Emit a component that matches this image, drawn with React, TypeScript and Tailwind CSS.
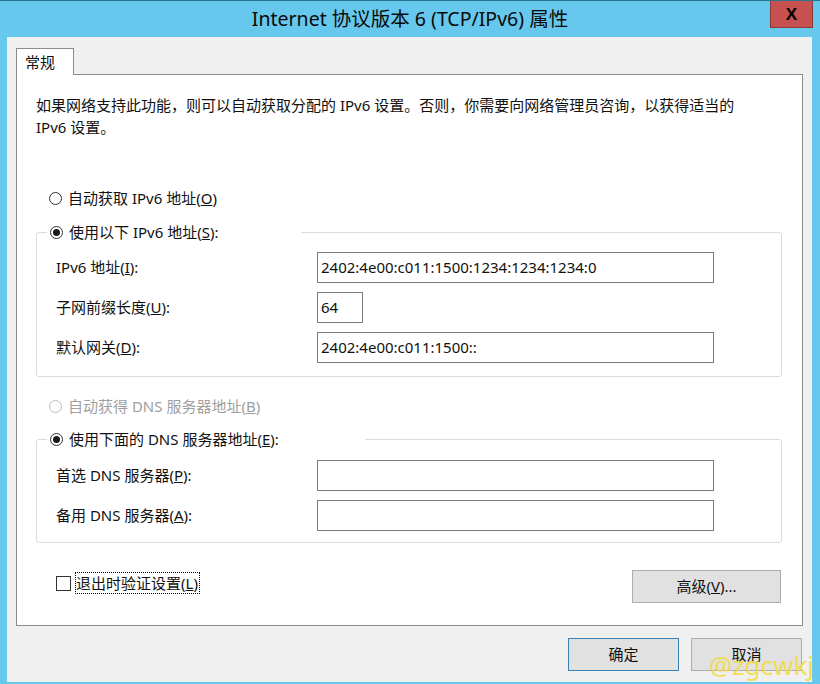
import React from "react";

const font = { fontFamily: '"Noto Sans", "Noto Sans CJK SC", sans-serif' };

function Radio({ checked, disabled }: { checked?: boolean; disabled?: boolean }) {
  return (
    <span
      className={
        "flex h-[13px] w-[13px] shrink-0 items-center justify-center rounded-full border bg-white " +
        (disabled ? "border-[#bcbcbc]" : "border-[#333333]")
      }
    >
      {checked ? <span className="h-[7px] w-[7px] rounded-full bg-[#1a1a1a]" /> : null}
    </span>
  );
}

function Input({ value, w }: { value?: string; w: string }) {
  return (
    <div
      className={
        "flex h-[31px] items-center border border-[#7a7a7a] bg-white pl-[3px] text-[15px] text-[#111] " + w
      }
    >
      {value}
    </div>
  );
}

export default function App() {
  return (
    <div className="relative h-[684px] w-[820px] overflow-hidden border-t border-[#2f7392] bg-[#66c8ec]" style={font}>
      {/* title bar */}
      <div className="relative flex h-[36px] items-center justify-center">
        <span className="text-[19.5px] text-[#0a0a0a]">Internet 协议版本 6 (TCP/IPv6) 属性</span>
        <div className="absolute right-[7px] top-[-1px] flex h-[28px] w-[43px] items-center justify-center border border-[#8b3a3a] bg-[#c75050]">
          <span className="text-[17px] font-bold leading-none text-black" style={{ fontFamily: '"Liberation Sans", sans-serif' }}>X</span>
        </div>
      </div>

      {/* client */}
      <div className="ml-[7px] flex h-[645px] w-[805px] flex-col bg-[#f0f0f0] pl-[9px] pr-[9px] pt-[11px] text-[15px] text-[#111]">
        {/* tab */}
        <div className="relative z-10 -mb-px flex h-[27px] w-[58px] items-center border border-b-0 border-[#8c8c8c] bg-white pl-[8px] text-[15px]">
          常规
        </div>
        {/* panel */}
        <div className="flex h-[552px] flex-col border border-[#8c8c8c] bg-white pl-[19px] pr-[20px] pt-[19px]">
          <div className="leading-[22px]">
            如果网络支持此功能，则可以自动获取分配的 IPv6 设置。否则，你需要向网络管理员咨询，以获得适当的
            <br />
            IPv6 设置。
          </div>

          <div className="mt-[49px] flex h-[22px] items-center gap-[6px] pl-[13px]">
            <Radio />
            <span>
              自动获取 IPv6 地址(<span className="underline">O</span>)
            </span>
          </div>

          {/* group 1 */}
          <div className="mt-[23px] rounded-[3px] border border-[#dcdcdc] pb-[13px]">
            <div className="-mt-[12px] ml-[10px] flex h-[22px] w-[254px] items-center gap-[6px] bg-white pl-[3px]">
              <Radio checked />
              <span>
                使用以下 IPv6 地址(<span className="underline">S</span>):
              </span>
            </div>
            <div className="mt-[9px] flex flex-col gap-[9px] pl-[19px]">
              <div className="flex items-center">
                <span className="w-[261px]">
                  IPv6 地址(<span className="underline">I</span>):
                </span>
                <Input value="2402:4e00:c011:1500:1234:1234:1234:0" w="w-[397px]" />
              </div>
              <div className="flex items-center">
                <span className="w-[261px]">
                  子网前缀长度(<span className="underline">U</span>):
                </span>
                <Input value="64" w="w-[46px]" />
              </div>
              <div className="flex items-center">
                <span className="w-[261px]">
                  默认网关(<span className="underline">D</span>):
                </span>
                <Input value="2402:4e00:c011:1500::" w="w-[397px]" />
              </div>
            </div>
          </div>

          <div className="mt-[18px] flex h-[22px] items-center gap-[6px] pl-[13px] text-[#a0a0a0]">
            <Radio disabled />
            <span>
              自动获得 DNS 服务器地址(<span className="underline">B</span>)
            </span>
          </div>

          {/* group 2 */}
          <div className="mt-[22px] rounded-[3px] border border-[#dcdcdc] pb-[11px]">
            <div className="-mt-[12px] ml-[10px] flex h-[22px] w-[318px] items-center gap-[6px] bg-white pl-[3px]">
              <Radio checked />
              <span>
                使用下面的 DNS 服务器地址(<span className="underline">E</span>):
              </span>
            </div>
            <div className="mt-[10px] flex flex-col gap-[9px] pl-[19px]">
              <div className="flex items-center">
                <span className="w-[261px]">
                  首选 DNS 服务器(<span className="underline">P</span>):
                </span>
                <Input w="w-[397px]" />
              </div>
              <div className="flex items-center">
                <span className="w-[261px]">
                  备用 DNS 服务器(<span className="underline">A</span>):
                </span>
                <Input w="w-[397px]" />
              </div>
            </div>
          </div>

          {/* checkbox + advanced */}
          <div className="mt-[27px] flex items-start justify-between pr-[1px]">
            <div className="mt-[2px] flex items-center gap-[4px] pl-[20px]">
              <span className="h-[15px] w-[15px] border border-[#333333] bg-white" />
              <span className="flex h-[22px] items-center border border-dotted border-black pr-[1px]">
                退出时验证设置(<span className="underline">L</span>)
              </span>
            </div>
            <div className="flex h-[33px] w-[149px] items-center justify-center border border-[#adadad] bg-[#e1e1e1]">
              高级(<span className="underline">V</span>)...
            </div>
          </div>
        </div>

        {/* bottom buttons */}
        <div className="mt-[12px] flex justify-end gap-[12px] pr-[1px]">
          <div className="flex h-[33px] w-[111px] items-center justify-center border border-[#3c7fb1] bg-[#e1e1e1]">
            确定
          </div>
          <div className="flex h-[33px] w-[111px] items-center justify-center border border-[#adadad] bg-[#e1e1e1]">
            取消
          </div>
        </div>
      </div>

      {/* watermark */}
      <div
        className="absolute bottom-[6px] right-[6px] text-[26px] leading-none text-[#f3dc3a] opacity-85"
        style={{ fontFamily: '"Noto Sans", sans-serif' }}
      >
        @zgcwkj
      </div>
    </div>
  );
}
